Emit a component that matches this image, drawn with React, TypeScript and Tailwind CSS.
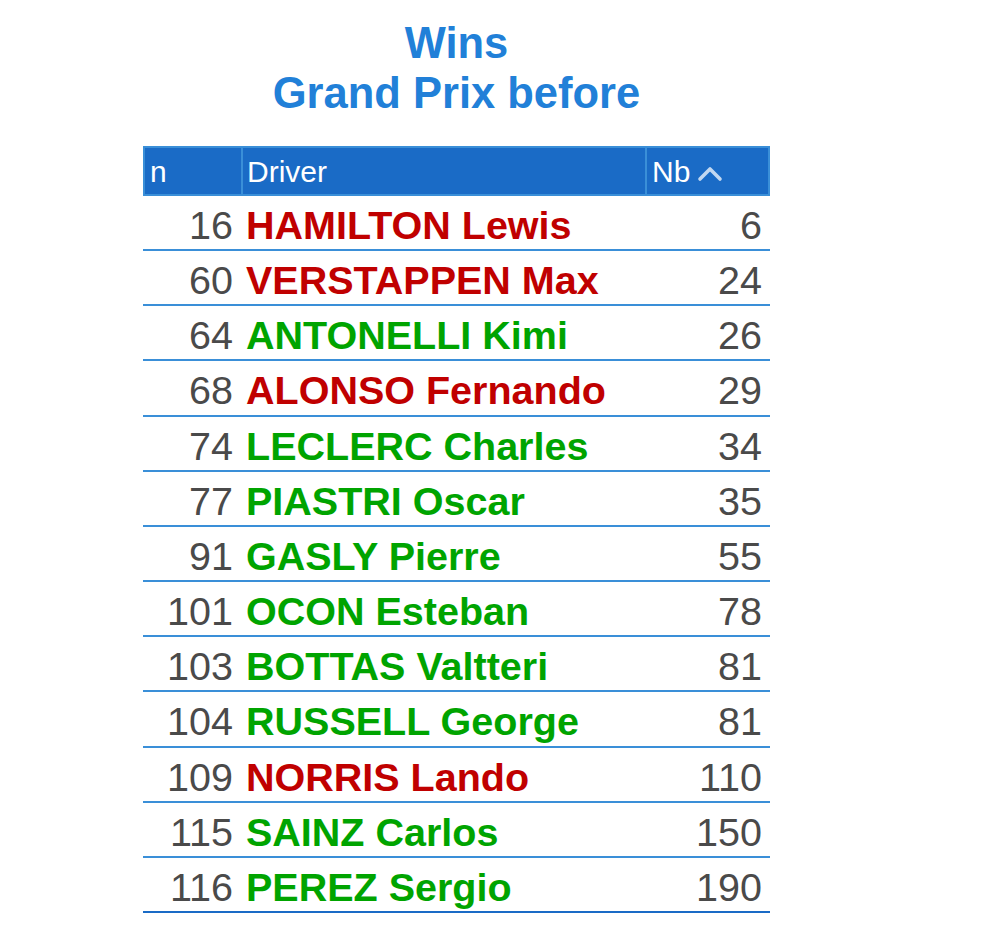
type Row = { n: number; driver: string; nb: number; win: boolean };

const rows: Row[] = [
    { n: 16, driver: "HAMILTON Lewis", nb: 6, win: false },
    { n: 60, driver: "VERSTAPPEN Max", nb: 24, win: false },
    { n: 64, driver: "ANTONELLI Kimi", nb: 26, win: true },
    { n: 68, driver: "ALONSO Fernando", nb: 29, win: false },
    { n: 74, driver: "LECLERC Charles", nb: 34, win: true },
    { n: 77, driver: "PIASTRI Oscar", nb: 35, win: true },
    { n: 91, driver: "GASLY Pierre", nb: 55, win: true },
    { n: 101, driver: "OCON Esteban", nb: 78, win: true },
    { n: 103, driver: "BOTTAS Valtteri", nb: 81, win: true },
    { n: 104, driver: "RUSSELL George", nb: 81, win: true },
    { n: 109, driver: "NORRIS Lando", nb: 110, win: false },
    { n: 115, driver: "SAINZ Carlos", nb: 150, win: true },
    { n: 116, driver: "PEREZ Sergio", nb: 190, win: true },
];

const SortUp = () => (
    <svg width="26" height="17" viewBox="0 0 26 17" className="ml-[7px] mt-1">
        <path d="M3 14 L13 4 L23 14" fill="none" stroke="#c2d8f1" strokeWidth="3.6" strokeLinecap="round" strokeLinejoin="round" />
    </svg>
);

export default function App() {
    return (
        <div className="min-h-[930px] bg-white font-['Liberation_Sans',Arial,sans-serif]">
            <div className="ml-[143px] w-[627px] pt-[18px]">
                <h1 className="text-center text-[43.5px] leading-[50px] font-bold text-[#2180d8]">
                    Wins
                    <br />
                    Grand Prix before
                </h1>
                <div className="mt-[28px]">
                    <div className="grid h-[50px] grid-cols-[98px_404px_125px] border-2 border-[#3a8fd8] bg-[#1a6bc6] text-[30px] text-white">
                        <div className="flex items-center border-r-2 border-[#3a8fd8] pl-[5px]">n</div>
                        <div className="flex items-center border-r-2 border-[#3a8fd8] pl-[4px]">Driver</div>
                        <div className="flex items-center pl-[5px]">
                            Nb
                            <SortUp />
                        </div>
                    </div>
                    {rows.map((r, i) => (
                        <div
                            key={r.n}
                            className={`grid h-[55.17px] grid-cols-[98px_404px_125px] border-b-2 text-[39.5px] ${
                                i === rows.length - 1 ? "border-[#1a6bc6]" : "border-[#3a8fd8]"
                            }`}
                        >
                            <div className="flex items-center justify-end pr-[8px] text-[#4a4a4a]">{r.n}</div>
                            <div className={`flex items-center pl-[5px] font-bold ${r.win ? "text-[#00a400]" : "text-[#c00000]"}`}>
                                {r.driver}
                            </div>
                            <div className="flex items-center justify-end pr-[8px] text-[#4a4a4a]">{r.nb}</div>
                        </div>
                    ))}
                </div>
            </div>
        </div>
    );
}
